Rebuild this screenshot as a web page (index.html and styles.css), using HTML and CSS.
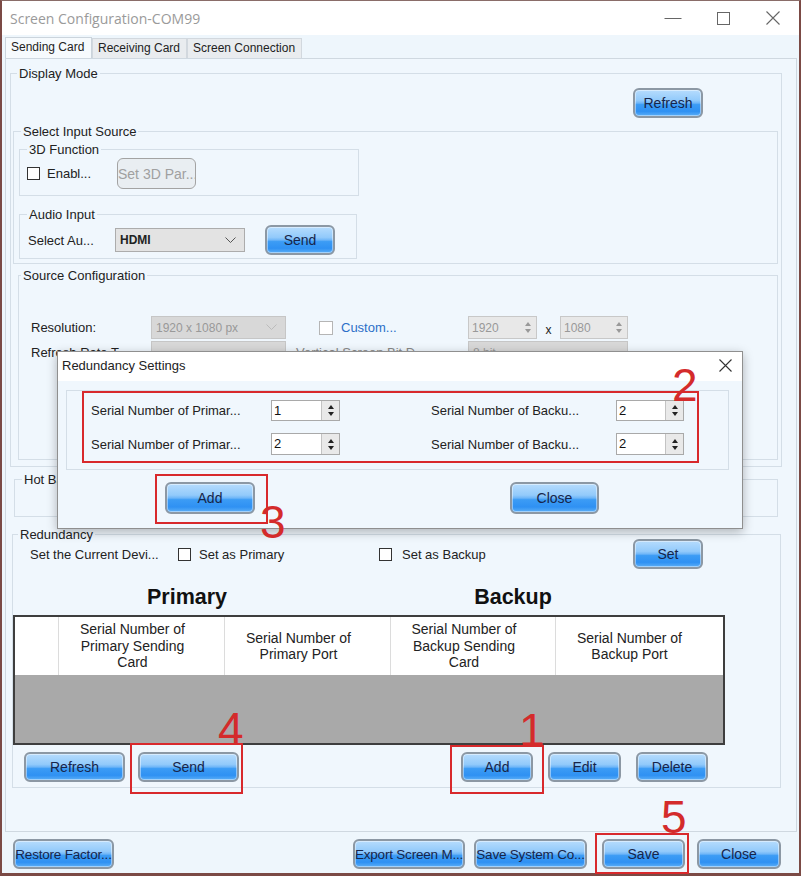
FILE: index.html
```html
<!DOCTYPE html>
<html>
<head>
    <title>Screen Configuration-COM99</title>
    <link rel="stylesheet" href="styles.css">
</head>
<body>
<div class="window">
    <div class="titlebar">
        <span class="title">Screen Configuration-COM99</span>
        <div class="controls">
            <span class="ctl"><svg width="18" height="18" viewBox="0 0 18 18"><path d="M0.5 9.5h17" stroke="#666" stroke-width="1"/></svg></span>
            <span class="ctl"><svg width="13" height="13" viewBox="0 0 13 13"><rect x="0.5" y="0.5" width="12" height="12" fill="none" stroke="#666"/></svg></span>
            <span class="ctl"><svg width="14" height="14" viewBox="0 0 14 14"><path d="M0.5 0.5l13 13M13.5 0.5l-13 13" stroke="#666" stroke-width="1.1"/></svg></span>
        </div>
    </div>

    <div class="tabs">
        <div class="tab active">Sending Card</div>
        <div class="tab">Receiving Card</div>
        <div class="tab">Screen Connection</div>
    </div>

    <div class="panel">
        <div class="group display-mode">
            <span class="legend">Display Mode</span>
            <div class="row-end"><button class="btn w70">Refresh</button></div>

            <div class="group input-source">
                <span class="legend">Select Input Source</span>
                <div class="group fn3d">
                    <span class="legend">3D Function</span>
                    <div class="line line-3d">
                        <span class="check"></span>
                        <span class="enable">Enabl...</span>
                        <button class="btn-off">Set 3D Par...</button>
                    </div>
                </div>
                <div class="group audio">
                    <span class="legend">Audio Input</span>
                    <div class="line line-audio">
                        <span class="audio-label">Select Au...</span>
                        <span class="select hdmi">HDMI<svg width="11" height="7" viewBox="0 0 11 7"><path d="M0.5 0.5l5 5 5-5" fill="none" stroke="#555" stroke-width="1"/></svg></span>
                        <button class="btn w70">Send</button>
                    </div>
                </div>
            </div>

            <div class="group source-config">
                <span class="legend">Source Configuration</span>
                <div class="src-row first">
                    <span class="src-label">Resolution:</span>
                    <span class="select off">1920 x 1080 px<svg width="11" height="7" viewBox="0 0 11 7"><path d="M0.5 0.5l5 5 5-5" fill="none" stroke="#bbb" stroke-width="1"/></svg></span>
                    <span class="custom"><span class="check light"></span><span class="link">Custom...</span></span>
                    <span class="spin w69"><span>1920</span><span class="spin-arr"><i class="up"></i><i class="down"></i></span></span>
                    <span class="times">x</span>
                    <span class="spin w68"><span>1080</span><span class="spin-arr"><i class="up"></i><i class="down"></i></span></span>
                </div>
                <div class="src-row">
                    <span class="src-label">Refresh Rate T...</span>
                    <span class="select off"></span>
                    <span class="bit-label">Vertical Screen Bit D...</span>
                    <span class="select off wide">8 bit</span>
                </div>
            </div>
        </div>

        <div class="group hot-backup">
            <span class="legend">Hot Backup</span>
        </div>

        <div class="group redundancy">
            <span class="legend">Redundancy</span>
            <div class="red-row">
                <span class="cur-dev">Set the Current Devi...</span>
                <span class="check"></span>
                <span class="opt-primary">Set as Primary</span>
                <span class="check"></span>
                <span class="opt-backup">Set as Backup</span>
                <button class="btn w70 push">Set</button>
            </div>
            <div class="headings">
                <span>Primary</span>
                <span>Backup</span>
            </div>
            <div class="table">
                <div class="thead">
                    <div class="th"></div>
                    <div class="th">Serial Number of<br>Primary Sending<br>Card</div>
                    <div class="th">Serial Number of<br>Primary Port</div>
                    <div class="th">Serial Number of<br>Backup Sending<br>Card</div>
                    <div class="th last">Serial Number of<br>Backup Port</div>
                </div>
                <div class="tbody"></div>
            </div>
            <div class="table-actions">
                <button class="btn w101">Refresh</button>
                <button class="btn w101 send">Send</button>
                <button class="btn w72 add">Add</button>
                <button class="btn w73 gap15">Edit</button>
                <button class="btn w72 gap15">Delete</button>
            </div>
        </div>
    </div>

    <div class="footer">
        <button class="btn w101 restore">Restore Factor...</button>
        <button class="btn w112 export">Export Screen M...</button>
        <button class="btn w113 save-sys">Save System Co...</button>
        <button class="btn w83 save">Save</button>
        <button class="btn w84 close">Close</button>
    </div>
</div>

<div class="dialog">
    <div class="dlg-title">
        <span>Redundancy Settings</span>
        <svg width="13" height="13" viewBox="0 0 13 13"><path d="M0.5 0.5l12 12M12.5 0.5l-12 12" stroke="#333" stroke-width="1.1"/></svg>
    </div>
    <div class="dlg-group">
        <div class="dlg-row">
            <span class="dlabel">Serial Number of Primar...</span>
            <span class="num"><span class="val">1</span><span class="arr"><i class="up"></i><i class="down"></i></span></span>
            <span class="dlabel">Serial Number of Backu...</span>
            <span class="num"><span class="val">2</span><span class="arr"><i class="up"></i><i class="down"></i></span></span>
        </div>
        <div class="dlg-row second">
            <span class="dlabel">Serial Number of Primar...</span>
            <span class="num"><span class="val">2</span><span class="arr"><i class="up"></i><i class="down"></i></span></span>
            <span class="dlabel">Serial Number of Backu...</span>
            <span class="num"><span class="val">2</span><span class="arr"><i class="up"></i><i class="down"></i></span></span>
        </div>
    </div>
    <div class="dlg-actions">
        <button class="btn dlg-add">Add</button>
        <button class="btn dlg-close">Close</button>
    </div>
</div>

<div class="mark box-2"></div>
<div class="mark box-3"></div>
<div class="mark box-4"></div>
<div class="mark box-1"></div>
<div class="mark box-5"></div>
<span class="step step-2">2</span>
<span class="step step-3">3</span>
<span class="step step-4">4</span>
<span class="step step-1">1</span>
<span class="step step-5">5</span>
</body>
</html>
```

FILE: styles.css
```css
* {
    box-sizing: border-box;
}
body {
    margin: 0;
    width: 801px;
    height: 876px;
    overflow: hidden;
    position: relative;
    font-family: "Liberation Sans", Arial, sans-serif;
    font-size: 13px;
    color: #222;
    background: #eef6fc;
}
.window {
    height: 876px;
    border: 2px solid #7b4a45;
    border-top: 1px solid #8a6d69;
    border-bottom-width: 3px;
    background: #eef6fc;
}
.titlebar {
    height: 34px;
    background: #fff;
    display: flex;
    align-items: center;
}
.title {
    padding-left: 8px;
    font-family: "Open Sans", "Liberation Sans", sans-serif;
    font-size: 14px;
    color: #9a9a9a;
}
.controls {
    margin-left: auto;
    margin-right: 1px;
    display: flex;
}
.ctl {
    width: 50px;
    height: 34px;
    display: flex;
    align-items: center;
    justify-content: center;
}
.tabs {
    height: 23px;
    padding-left: 3px;
    display: flex;
    align-items: flex-end;
}
.tab {
    height: 20px;
    padding: 0 5px;
    font-size: 12px;
    line-height: 19px;
    background: #e9ecef;
    border: 1px solid #d2d8de;
    border-bottom: 0;
    color: #222;
}
.tab.active {
    height: 21px;
    width: 87px;
    background: #f6fafd;
    border-color: #cbd4dc;
    line-height: 18px;
}
.tab:nth-child(2) { width: 95px; }
.tab:nth-child(3) { width: 115px; }

.panel {
    margin-left: 3px;
    width: 792px;
    height: 774px;
    border: 1px solid #cfd8e0;
    background: #f0f7fd;
}
.group {
    border: 1px solid #d4dee7;
}
.legend {
    display: block;
    width: max-content;
    height: 15px;
    line-height: 15px;
    margin: -8px 0 0 7px;
    padding: 0 2px;
    background: #f0f7fd;
}
.display-mode {
    margin: 14px 0 0 4px;
    width: 772px;
    height: 394px;
}
.display-mode > .legend { margin-left: 6px; }
.row-end {
    margin-top: 7px;
    padding-right: 78px;
    display: flex;
    justify-content: flex-end;
}
.input-source {
    margin: 13px 0 0 2px;
    width: 765px;
    height: 133px;
}
.fn3d {
    margin: 10px 0 0 5px;
    width: 340px;
    height: 47px;
}
.audio {
    margin: 18px 0 0 5px;
    width: 338px;
    height: 45px;
}
.line {
    display: flex;
    align-items: center;
}
.line-3d {
    margin-top: 1px;
    height: 31px;
    padding-left: 7px;
}
.enable {
    margin-left: 7px;
    width: 70px;
}
.line-audio {
    margin-top: 3px;
    height: 30px;
    padding-left: 8px;
}
.audio-label {
    width: 87px;
}
.source-config {
    margin: 11px 0 0 7px;
    width: 760px;
    height: 185px;
}
.source-config > .legend { margin-left: 2px; }
.src-row {
    margin-top: 2px;
    height: 23px;
    padding-left: 12px;
    display: flex;
    align-items: center;
}
.src-row.first { margin-top: 33px; }
.src-label { width: 120px; }
.custom {
    margin-left: 33px;
    width: 149px;
    display: flex;
    align-items: center;
}
.link {
    margin-left: 8px;
    color: #2c6fc8;
}
.bit-label {
    width: 182px;
    padding-left: 10px;
    color: #888;
}
.times {
    width: 23px;
    text-align: center;
    font-size: 12px;
    padding-top: 4px;
}

.check {
    display: inline-block;
    width: 13px;
    height: 13px;
    border: 1px solid #333;
    background: #fff;
    flex: none;
}
.check.light {
    width: 14px;
    height: 14px;
    border-color: #b5b5b5;
}

.select {
    height: 24px;
    display: flex;
    align-items: center;
    justify-content: space-between;
    padding: 0 8px 0 4px;
    font-size: 12px;
}
.select.hdmi {
    width: 130px;
    background: #e3e3e3;
    border: 1px solid #acacac;
    font-weight: bold;
    color: #222;
    margin-right: 20px;
}
.select.off {
    width: 135px;
    height: 23px;
    background: #d8d8d8;
    border: 1px solid #c6c6c6;
    color: #999;
}
.select.off.wide { width: 160px; }

.spin {
    height: 23px;
    display: flex;
    justify-content: space-between;
    align-items: center;
    padding-left: 3px;
    background: #e8e8e8;
    border: 1px solid #c8c8c8;
    color: #999;
    font-size: 12px;
}
.w69 { width: 69px; }
.w68 { width: 68px; }
.spin-arr {
    width: 17px;
    height: 21px;
    display: flex;
    flex-direction: column;
    align-items: center;
    justify-content: center;
    gap: 3px;
}
.spin-arr .up, .arr .up {
    width: 0;
    height: 0;
    border-left: 3px solid transparent;
    border-right: 3px solid transparent;
    border-bottom: 4px solid #999;
}
.spin-arr .down, .arr .down {
    width: 0;
    height: 0;
    border-left: 3px solid transparent;
    border-right: 3px solid transparent;
    border-top: 4px solid #999;
}

.btn {
    height: 30px;
    padding: 0;
    border: 2px solid #8c98a4;
    border-radius: 6px;
    background: linear-gradient(to bottom, #b6dcfd 0%, #92cafb 40%, #6fb6f8 50%, #3c9cf5 56%, #2f91f3 82%, #5caff7 100%);
    box-shadow: inset 0 0 0 1px rgba(255, 255, 255, 0.45);
    color: #17254a;
    font-family: "Liberation Sans", Arial, sans-serif;
    font-size: 14px;
    white-space: nowrap;
    overflow: hidden;
    display: flex;
    align-items: center;
    justify-content: center;
}
.w70 { width: 70px; }
.w72 { width: 72px; }
.w73 { width: 73px; }
.w83 { width: 83px; }
.w84 { width: 84px; }
.w101 { width: 101px; }
.w112 { width: 112px; }
.w113 { width: 113px; }
.btn-off {
    margin-left: 0;
    width: 79px;
    height: 31px;
    padding: 0;
    border: 1px solid #a3a3a3;
    border-radius: 6px;
    background: #e9eef2;
    color: #a0a0a0;
    font-family: "Liberation Sans", Arial, sans-serif;
    font-size: 14px;
    white-space: nowrap;
    overflow: hidden;
}

.hot-backup {
    margin: 12px 0 0 8px;
    width: 764px;
    height: 38px;
}
.redundancy {
    margin: 17px 0 0 6px;
    width: 769px;
    height: 254px;
}
.redundancy > .legend { margin-left: 5px; }
.red-row {
    margin-top: -3px;
    height: 30px;
    padding: 0 77px 0 17px;
    display: flex;
    align-items: center;
}
.cur-dev { width: 148px; }
.opt-primary {
    margin-left: 8px;
    width: 180px;
}
.opt-backup { margin-left: 10px; }
.push { margin-left: auto; }
.headings {
    margin-top: 16px;
    height: 24px;
    display: grid;
    grid-template-columns: 348px 304px;
    font-size: 21.5px;
    font-weight: bold;
    line-height: 24px;
    color: #111;
    text-align: center;
}
.table {
    margin-top: 6px;
    width: 712px;
    height: 130px;
    border: 2px solid #3e3e3e;
    display: flex;
    flex-direction: column;
}
.thead {
    height: 58px;
    display: grid;
    grid-template-columns: 44px 166px 166px 165px 165px;
    background: #fff;
}
.th {
    border-right: 1px solid #dcdcdc;
    padding-right: 18px;
    display: flex;
    align-items: center;
    justify-content: center;
    text-align: center;
    line-height: 16.5px;
    font-size: 14px;
    color: #222;
}
.th.last { border-right: 0; }
.tbody {
    flex: 1;
    background: #a9a9a9;
}
.table-actions {
    margin-top: 7px;
    padding-left: 11px;
    display: flex;
}
.table-actions .send { margin-left: 13px; }
.table-actions .add { margin-left: 222px; }
.table-actions .gap15 { margin-left: 15px; }

.footer {
    height: 41px;
    padding: 7px 0 0 11px;
    display: flex;
}
.footer .restore, .footer .export, .footer .save-sys {
    font-size: 13.5px;
    letter-spacing: -0.2px;
}
.footer .export { margin-left: 239px; }
.footer .save-sys { margin-left: 9px; }
.footer .save { margin-left: 15px; }
.footer .close { margin-left: 12px; }

.dialog {
    position: absolute;
    left: 57px;
    top: 351px;
    width: 686px;
    height: 178px;
    border: 1px solid #8f8f8f;
    background: #f0f7fd;
    box-shadow: 0 3px 10px rgba(0, 0, 0, 0.28);
}
.dlg-title {
    height: 29px;
    background: #fff;
    display: flex;
    align-items: center;
    justify-content: space-between;
    padding: 0 10px 3px 4px;
    font-size: 13px;
    color: #222;
}
.dlg-group {
    margin: 9px 0 0 8px;
    width: 663px;
    height: 80px;
    border: 1px solid #d4dee7;
}
.dlg-row {
    margin-top: 9px;
    height: 21px;
    padding-left: 24px;
    display: grid;
    grid-template-columns: 180px 69px 276px 68px;
    align-items: center;
}
.dlg-row .dlabel:nth-child(3) { margin-left: 91px; }
.dlg-row.second {
    margin-top: 12px;
    height: 22px;
}
.num {
    height: 100%;
    display: flex;
    background: #fff;
    border: 1px solid #a9a9a9;
}
.val {
    flex: 1;
    padding: 2px 0 0 2px;
    font-size: 13px;
    color: #111;
}
.arr {
    width: 18px;
    display: flex;
    flex-direction: column;
    align-items: center;
    justify-content: center;
    gap: 3px;
    background: #e9e9e9;
    border-left: 1px solid #c3c3c3;
}
.arr .up { border-bottom-color: #222; }
.arr .down { border-top-color: #222; }
.dlg-actions {
    margin-top: 12px;
    display: flex;
}
.dlg-actions .btn { height: 32px; }
.dlg-add {
    margin-left: 107px;
    width: 90px;
}
.dlg-close {
    margin-left: 255px;
    width: 89px;
}

.mark {
    position: absolute;
    border: 2px solid #d8292c;
}
.box-2 { left: 82px; top: 391px; width: 617px; height: 72px; }
.box-3 { left: 155px; top: 474px; width: 113px; height: 50px; }
.box-4 { left: 130px; top: 743px; width: 113px; height: 51px; }
.box-1 { left: 450px; top: 745px; width: 94px; height: 49px; }
.box-5 { left: 595px; top: 833px; width: 94px; height: 41px; }
.step {
    position: absolute;
    font-family: "Liberation Sans", Arial, sans-serif;
    font-size: 46px;
    line-height: 1;
    color: #d42b2b;
}
.step-2 { left: 672px; top: 362px; }
.step-3 { left: 260px; top: 499px; }
.step-4 { left: 218px; top: 706px; }
.step-1 { left: 519px; top: 707px; }
.step-5 { left: 661px; top: 794px; }
```
